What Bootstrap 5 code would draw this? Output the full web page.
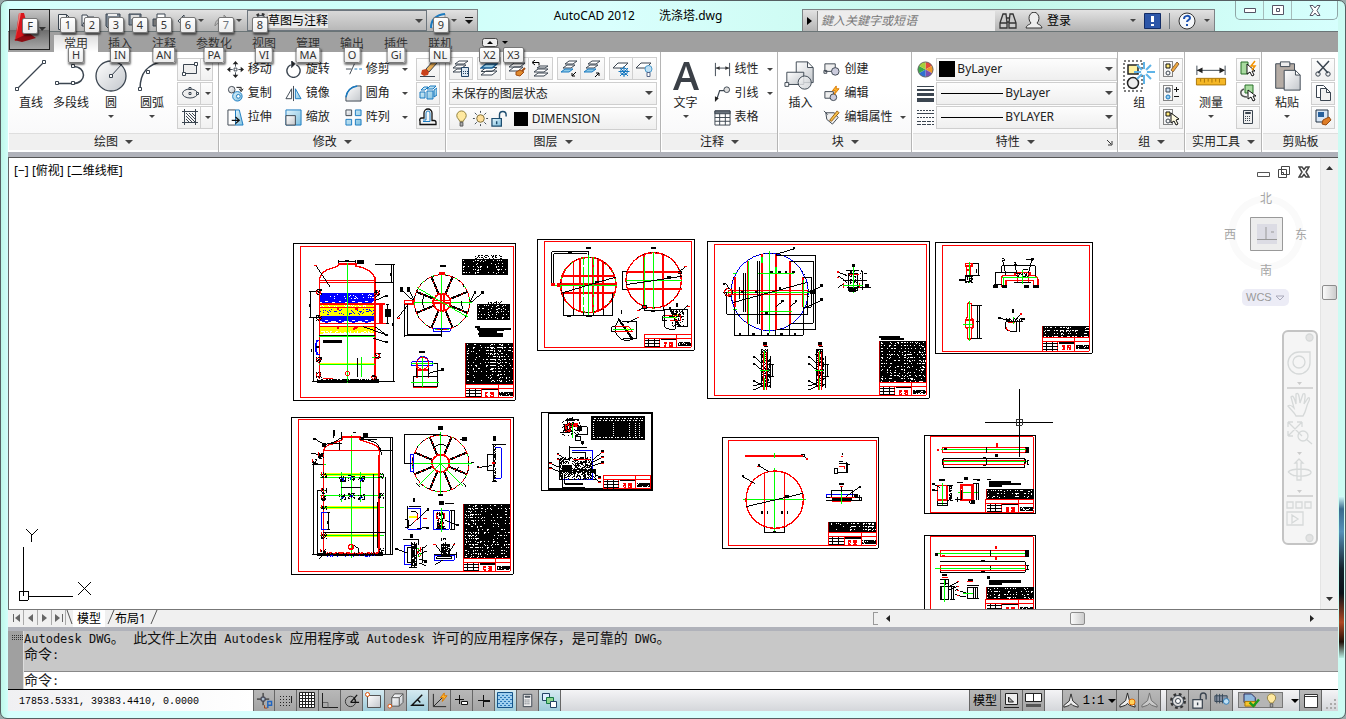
<!DOCTYPE html>
<html lang="zh-CN">
<head>
<meta charset="utf-8">
<meta name="viewport" content="width=device-width, initial-scale=1">
<title>AutoCAD 2012 洗涤塔.dwg</title>
<link href="https://cdn.jsdelivr.net/npm/bootstrap@5.3.0/dist/css/bootstrap.min.css" rel="stylesheet">
<style>
body{font:12px/16px "Noto Sans","Noto Sans CJK SC",sans-serif;color:#222;background:#9aa;overflow:hidden}
button,input,select{font:inherit;color:inherit}
button{border:0;background:none;padding:0}
svg{display:block;flex:none}
use{fill:none;stroke:#3b4550}
.win{border:1px solid #555f62;border-radius:7px;padding:0 7px 7px;background:linear-gradient(90deg,#bdf8e8,#d6fffd 8px,#d6fffd 60%,#cdfbf3)}
.win::after{content:"";position:absolute;right:1px;top:495px;bottom:60px;width:5px;background:linear-gradient(#d6fffd,#3a6a8c 8%,#5690b8 22%,#14202a 45%,#0a1018 60%,#b04a25 78%,#201008 90%,#b9f0e4)}
.titlebar{height:31px;border-bottom:1px solid #6a7476;background:linear-gradient(90deg,#d6fffd,#cdfff8 30%,#d9fffd 45%,#c4f8ea 75%,#d6fffd)}
.tbar{height:22px;border:1px solid #7d8285;border-bottom:0;background:linear-gradient(#e2e2e2,#b4b4b4)}
.qat{margin-left:40px}
.appbtn{position:absolute;left:8px;top:8px;width:41px;height:41px;border:1px solid #222;background:linear-gradient(#c4c4c4,#8d8d8d 50%,#6d6d6d 52%,#a8a8a8);z-index:5}
.kt{position:absolute;z-index:6;min-width:16px;height:16px;padding:0 3px;border:1px solid #777;border-radius:2px;background:linear-gradient(#fff,#ececec);box-shadow:1px 2px 2px #0008;font-size:11px;line-height:14px;text-align:center;color:#333}
.tri{width:0;height:0;border:4px solid transparent;border-top-color:#444;border-bottom:0;flex:none}
.tri.sm{border-width:3px;border-bottom:0}
.qb{position:relative;width:24px;height:21px;flex:none}
.qb>svg{margin:2px 0 0 2px}
.qb .kt{left:6px;top:7px}
.tabs{height:20px;background:#a0a0a0;padding-left:46px}
.tab{position:relative;padding:0 10px;height:20px;line-height:23px;color:#333}
.tab.on{height:17px;line-height:18px;margin-top:3px;background:linear-gradient(#ddd,#fff)}
.tab .kt{top:15px;left:50%;translate:-50% 0}
.tab.on .kt{top:12px}
.ribbon{height:100px;background:#fff;padding-left:1px}
.panel{display:flex;flex-direction:column;border-right:1px solid #b5b5b5;margin-right:1px;min-width:0}
.pbody{height:81px;padding-top:5px;display:flex;background:linear-gradient(#fff 50%,#f9f9fa)}
.ptitle{height:17px;background:#f0f0f0;border-top:1px solid #dedede;display:flex;align-items:center;justify-content:center;gap:7px;position:relative}
.big{display:flex;flex-direction:column;align-items:center;width:40px;height:72px}
.big .pic{height:38px;display:flex;align-items:center}
.big .tri{margin-top:4px}
.grid3{display:grid;grid-template-rows:repeat(3,24px);align-items:center}
.sm-b{display:flex;align-items:center;gap:4px;height:24px;white-space:nowrap;text-align:left}
.sm-b .tri{margin-left:8px}
.near .sm-b .tri{margin-left:4px}
.box{width:24px;height:23px;border:1px solid #cfcfcf;background:linear-gradient(#fdfdfd,#f0f0f0);display:flex;align-items:center;justify-content:center}
.d-flex>.box+.box{border-left:0}
.split{width:36px;justify-content:flex-start;padding-left:3px;gap:6px;position:relative}
.split::before{content:"";position:absolute;left:22px;top:0;bottom:0;border-left:1px solid #cfcfcf}
.combo{position:relative;height:23px;border:1px solid #cfcfcf;background:linear-gradient(#fdfdfd,#efefef);display:flex;align-items:center}
.combo select{appearance:none;border:0;background:none;flex:1;min-width:0;height:20px;padding:0 12px 0 2px;outline:0}
.combo>.tri{position:absolute;right:3px;top:8px}
.wsp{width:180px;height:21px;background:linear-gradient(#d8d8d8,#b8b8b8)}
.combo.wsp select{padding:0;flex:none;width:60px;margin-left:-2px;height:15px;line-height:15px;background:#e9e9e9;color:#000}
.props{gap:2px}
.ln{width:62px;height:1px;background:#000;flex:none}
.strip{background:#b0b2ba}
.work{border-top:1px solid #555;border-left:1px solid #666;background:#fff;min-height:0}
.drawing{position:absolute;inset:0;width:100%;height:100%}
.vs{width:18px;background:#f0f0f0;border-left:1px solid #e4e4e4}
.thumb{border:1px solid #8c8c8c;border-radius:2px;background:linear-gradient(90deg,#fafafa,#ccc)}
.vname{left:5px;top:5px;color:#000}
.mdi{right:10px;top:8px}
.cube{right:9px;top:32px;width:88px;height:120px;color:#a5a5a5}
.wcs{right:31px;top:131px;width:47px;height:17px;border-radius:5px;background:#ececf6;color:#999;font:11px/17px "Liberation Sans",sans-serif;padding-left:4px;text-align:left}
.navbox{right:2px;top:172px;width:36px;height:215px;border:2px solid #c4c4c4;border-radius:6px;background:#f5f5f5}
.lay{height:18px;background:#f0f0f0;border-top:1px solid #777}
.lay .nv{width:14px;border-right:1px solid #aaa;height:15px;display:flex;align-items:center;justify-content:center}
.ltab{font-size:12px;line-height:16px;position:relative;color:#000}
.hs{height:17px;width:35%;padding-right:24px}
.cmd{height:40px;background:#c8c8c8;font-family:"DejaVu Sans Mono","Noto Sans CJK SC",monospace;color:#111}
.cmdgrip{width:16px;background:#a0a0a0;height:58px;border-right:1px solid #ddd}
.cj{font-size:14px;line-height:15px}
.cj span{font-size:12px}
.cin{height:18px;border-top:1px solid #888;background:#fff;font-family:"DejaVu Sans Mono","Noto Sans CJK SC",monospace;font-size:14px;display:flex;align-items:center}
.cin input{border:0;outline:0;height:16px;padding:0}
.status{height:22px;border-top:1px solid #000;background:linear-gradient(#f4f4f6,#d4d6da)}
.coord{width:245px;padding-left:11px;font:10px/23px "Liberation Mono",monospace;color:#000;background:linear-gradient(90deg,#f0f0f2,#fff)}
.st{width:22px;height:21px;border-right:1px solid #666;background:linear-gradient(#b8b8b8,#a4a4a4);display:flex;align-items:center;justify-content:center;flex:none}
.st.on{background:linear-gradient(#d5eaf1,#9ecbd9)}
#toggles .st:first-child{border-left:1px solid #666}
.sgroup{display:flex;border-left:1px solid #666}
.tray{width:45px;height:16px;margin:2px 0 0 5px;background:#b5b5b5;border:1px solid #777;gap:4px}
.search{width:178px;height:20px;border:0;border-left:1px solid #888;background:#ededed;font-style:italic;padding:0 3px;outline:0}
.search::placeholder{color:#777}
.wc{border:1px solid #8fa5a5;border-top:0;border-radius:0 0 5px 5px;height:19px;margin-left:20px}
.wc button{width:28px;height:18px;display:flex;align-items:center;justify-content:center;border-right:1px solid #a5bcbb}
.wc button:last-child{border:0;width:45px}
</style>
</head>
<body>
<svg width="0" height="0" class="position-absolute">
<defs>
<linearGradient id="gf" x2="1" y2="1"><stop stop-color="#fff"/><stop offset="1" stop-color="#c3c7cc"/></linearGradient>
<linearGradient id="gb" x2="1" y2="1"><stop stop-color="#e2f4fb"/><stop offset="1" stop-color="#7fc0e0"/></linearGradient>
<symbol id="new" viewBox="0 0 18 18"><path fill="url(#gf)" d="M2.500 1.500h8l4 4v11h-12zM10.500 1.500v4h4"/></symbol>
<symbol id="open" viewBox="0 0 18 18"><path fill="url(#gf)" d="M2 13V2h5l1 2h6v3M2 13l4-7h11l-4 7z"/></symbol>
<symbol id="save" viewBox="0 0 18 18"><path fill="#7d8894" d="M2 1h14v14H4l-2-2z"/><path fill="#eee" stroke="none" d="M4 1h9v2H4zM5 9h8v6H5z"/></symbol>
<symbol id="saveas" viewBox="0 0 18 18"><path fill="#7d8894" d="M1 1h12v11H1z"/><path fill="#ddd" stroke="none" d="M3 2h8v4H3z"/><path fill="#eee" d="M5 5h11v10H5z"/></symbol>
<symbol id="print" viewBox="0 0 18 18"><path fill="#fff" d="M5 6V1h8v5"/><path fill="#777" d="M1 6h16v7H1z"/><path fill="#fff" d="M5 10h8v6H5z"/></symbol>
<symbol id="undo" viewBox="0 0 18 18"><path fill="#eef2f5" d="M2 8l6-6v3c6 0 9 3 9 8-2-3-5-4-9-4v4z"/></symbol>
<symbol id="redo" viewBox="0 0 18 18"><path stroke="#888" fill="#bbb" d="M16 8l-6-6v3c-6 0-9 3-9 8 2-3 5-4 9-4v4z"/></symbol>
<symbol id="gear" viewBox="0 0 18 18"><circle cx="9" cy="9" r="6.500" stroke-width="3" stroke-dasharray="2.600 2.500" stroke="#333"/><circle cx="9" cy="9" r="5.500" fill="#ddd"/><circle cx="9" cy="9" r="2.500" fill="#fff"/></symbol>
<symbol id="arcq" viewBox="0 0 18 18"><path fill="url(#gf)" stroke="#999" d="M2 16C2 7 7 3 16 2v14z"/><path stroke="#1a7ac0" stroke-width="2" d="M2 16C2 7 7 3 16 2"/></symbol>
<symbol id="move" viewBox="0 0 18 18"><path d="M9 1v5M9 12v5M1 9h5M12 9h5M7.500 7.500h3v3h-3z"/><path fill="#222" stroke="none" d="M9 0l3 3.500H6zM9 18l3-3.500H6zM0 9l3.500-3v6zM18 9l-3.500-3v6z"/></symbol>
<symbol id="rotate" viewBox="0 0 18 18"><path stroke-width="1.500" d="M6 4a7 7 0 1 0 6 0"/><path fill="#222" d="M7 0l4 3-4 4z"/></symbol>
<symbol id="trim" viewBox="0 0 18 18"><path d="M1 8.500h6M5 14l5-11"/><path stroke="#1a7ac0" stroke-dasharray="3 2" d="M10 8.500h8"/></symbol>
<symbol id="copy" viewBox="0 0 18 18"><circle cx="5" cy="5" r="3.500" fill="url(#gf)"/><circle cx="11" cy="12" r="5" fill="url(#gb)" stroke="#1a7ac0"/><circle cx="12" cy="12" r="2" fill="#fff" stroke="#1a7ac0"/><path stroke="#111" d="M10 2.500h5v3M13 4l2 3 2-3"/></symbol>
<symbol id="mirror" viewBox="0 0 18 18"><path fill="#fff" d="M1 14.500L7 4v10.500z"/><path fill="url(#gb)" stroke="#1a7ac0" d="M17 14.500L11 4v10.500z"/><path d="M9 1v16"/></symbol>
<symbol id="fillet" viewBox="0 0 18 18"><path fill="url(#gf)" d="M1 17V13C2 6 6 2 13 1h4v16z"/><path stroke="#1a7ac0" stroke-width="1.500" d="M1 13C2 6 6 2 13 1"/></symbol>
<symbol id="stretch" viewBox="0 0 18 18"><path fill="#fff" d="M1 1h8v16H1z"/><path fill="url(#gb)" stroke="#1a7ac0" d="M9 1h4l4 16H9z"/><path stroke="#111" stroke-width="1.300" d="M5 12h7M9 8.500l4 3.500-4 3.500"/></symbol>
<symbol id="scale" viewBox="0 0 18 18"><path fill="url(#gb)" stroke="#1a7ac0" d="M1 1h16v16H1z"/><path fill="url(#gf)" d="M1 7h10v10H1z"/></symbol>
<symbol id="array" viewBox="0 0 18 18"><path fill="url(#gf)" d="M1 1h6v6H1z"/><path stroke="#1a7ac0" fill="url(#gb)" d="M11 1h6v6h-6zM1 11h6v6H1zM11 11h6v6h-6z"/></symbol>
<symbol id="erase" viewBox="0 0 18 18"><path d="M1 16.500h15"/><path fill="#e9ad55" d="M7 9l8-9 3 3-8 9z"/><path stroke="none" fill="#c8401a" d="M3 10l4-1 3 3-1 3-4 1-3-2z"/></symbol>
<symbol id="explode" viewBox="0 0 18 18"><path fill="url(#gb)" stroke="#1a7ac0" d="M1 8h5v6H1zM8 7h6v8H8zM2 6l3-3h4L6 6zM8 5l3-3h6l-3 3zM15 6l3-2v7l-3 2z"/></symbol>
<symbol id="offset" viewBox="0 0 18 18"><path stroke="#111" stroke-width="1.300" d="M1 16.500h16v-2a2 2 0 0 0-2-2h-2V5a4 4 0 0 0-8 0v5H3a2 2 0 0 0-2 3z"/><path stroke="#1a7ac0" d="M4 13.500h7V5a2 2 0 0 0-4 0v7H4"/></symbol>
<symbol id="rect" viewBox="0 0 18 18"><path fill="#eee" d="M2.500 4.500h13v9h-13z"/><path fill="#fff" d="M1.500 12.500h3v3h-3zM13.500 2.500h3v3h-3z"/></symbol>
<symbol id="ell" viewBox="0 0 18 18"><ellipse cx="9" cy="9.500" rx="7.500" ry="4.500" fill="#eee"/><path fill="#fff" d="M8 3.500h2v2H8zM8 8.500h2v2H8zM15.500 8.500h2v2h-2z"/></symbol>
<symbol id="hatch" viewBox="0 0 18 18"><path d="M3.500 1v16M14.500 1v16M1 3.500h16M1 14.500h16M5 5l9 9M8 5l6 6M5 8l6 6M11 5l3 3M5 11l3 3"/></symbol>
<symbol id="line" viewBox="0 0 34 34"><path stroke-width="1.300" d="M3 30L29 4"/><path fill="#fff" d="M1.500 28.500h3v3h-3zM28.500 1.500h3v3h-3z"/></symbol>
<symbol id="poly" viewBox="0 0 34 34"><path stroke-width="1.500" d="M3 24.500h16c14 0 14-17 0-17"/><path fill="#fff" d="M1.500 22.500h3v3h-3zM17.500 22.500h3v3h-3zM17.500 5.500h3v3h-3z"/></symbol>
<symbol id="circ" viewBox="0 0 34 34"><circle cx="17" cy="17" r="15" fill="url(#gf)" stroke-width="1.300"/><path d="M17 17L28 5"/><path fill="#fff" d="M15.500 15.500h3v3h-3z"/></symbol>
<symbol id="arc" viewBox="0 0 34 34"><path stroke-width="1.500" d="M5 30C5 14 12 5 30 2"/><path fill="#fff" d="M3.500 28.500h3v3h-3zM11.500 11.500h3v3h-3z"/></symbol>
<symbol id="layb" viewBox="0 0 18 18"><path fill="#fff" d="M1 15l5-4h11l-5 4zM1 11.500l5-4h11l-5 4z"/><path fill="#9bd0ea" stroke="#1a5f95" stroke-width="1.300" d="M1 8l5-4h11l-5 4z"/></symbol>
<symbol id="calcl" viewBox="0 0 18 18"><path fill="#fff" d="M1 12l4-3h7l-4 3zM1 8l4-3h9l-4 3zM3 4l4-3h9l-4 3z"/><path fill="#dce8f3" stroke="#246" d="M9.500 7.500h7v9h-7z"/><path stroke="#246" stroke-dasharray="1 1" d="M11 11.500h5M11 13.500h5"/></symbol>
<symbol id="layp" viewBox="0 0 18 18"><path fill="#fff" d="M1 11l5-4h9l-5 4zM1 7l5-4h11l-5 4z"/><path fill="#e08a2c" stroke="#a04a10" d="M8 12l4-2 4 2-4 4-4-1z"/><path stroke="#a04a10" stroke-width="2" d="M14 11l3-3"/></symbol>
<symbol id="layu" viewBox="0 0 18 18"><path fill="#fff" d="M3 16l4-3h10l-4 3zM3 12l4-3h10l-4 3zM6 8l3-2h8l-3 2z"/><path stroke="#000" d="M2 2.500h6v3M4 0L1 2.500 4 5"/></symbol>
<symbol id="layin" viewBox="0 0 18 18"><path fill="#fff" d="M3 8l4-3h8l-4 3zM5 4l4-3h8l-4 3z"/><path fill="#8cc8e6" stroke="#1a7ac0" d="M1 12l4-3h8l-4 3z"/><path stroke="#000" d="M16 12l-4 4M12 13v3h3"/></symbol>
<symbol id="layout" viewBox="0 0 18 18"><path fill="#fff" d="M3 8l4-3h8l-4 3zM5 4l4-3h8l-4 3z"/><path fill="#8cc8e6" stroke="#1a7ac0" d="M1 12l4-3h8l-4 3z"/><path stroke="#000" d="M12 17l4-4M13 13h3v3"/></symbol>
<symbol id="layfr" viewBox="0 0 18 18"><path fill="#fff" d="M1 8l5-5h10l-5 5z"/><path stroke="#1a7ac0" d="M12 6v11M6.500 11.500h11M8 8l8 8M16 8l-8 8"/><circle cx="12" cy="11.500" r="3.500" stroke="#1a7ac0"/></symbol>
<symbol id="layof" viewBox="0 0 18 18"><path fill="#fff" d="M1 8l5-5h10l-5 5z"/><circle cx="13.500" cy="9" r="3.500" fill="#bfe0f5" stroke="#4a9acb"/><path stroke="#568" fill="#fff" d="M12 12.500h3v4h-3z"/></symbol>
<symbol id="bulb" viewBox="0 0 18 18"><path stroke="#8b7a35" fill="#ffe9a0" d="M7 12c0-2-3-3-3-6a5 5 0 0 1 10 0c0 3-3 4-3 6z"/><path fill="#aaa" stroke="#555" d="M7.500 13h3v4h-3z"/></symbol>
<symbol id="sun" viewBox="0 0 18 18"><circle cx="9" cy="9" r="4" fill="#ffdf9a" stroke="#7a6a35"/><path d="M9 1v2M9 15v2M1 9h2M15 9h2M3 3l2 2M13 13l2 2M15 3l-2 2M5 13l-2 2"/></symbol>
<symbol id="unlock" viewBox="0 0 18 18"><path fill="url(#gb)" stroke="#1d4c6e" stroke-width="1.300" d="M1 9h10v8H1z"/><path stroke="#1d4c6e" stroke-width="1.500" d="M9 9V5a3 3 0 0 1 7 0v2M6 12v3"/></symbol>
<symbol id="lock2" viewBox="0 0 18 18"><path fill="#eee" stroke-width="1.300" d="M2 8h10v9H2z"/><path stroke-width="1.500" d="M10 8V4a3 3 0 0 1 6 0v4M7 11v3"/></symbol>
<symbol id="dim" viewBox="0 0 18 18"><path d="M1.500 2v14M16.500 2v14M2 7.500h14"/><path fill="#333" stroke="none" d="M2 7.500l4-2v4zM16 7.500l-4-2v4z"/></symbol>
<symbol id="lead" viewBox="0 0 18 18"><path stroke-width="1.300" d="M3 15l3-9h5"/><path fill="#222" stroke="none" d="M1 18v-6l4 2z"/><circle cx="13.500" cy="5" r="3" fill="#ddd"/></symbol>
<symbol id="table" viewBox="0 0 18 18"><path fill="#fff" d="M1 2h16v15H1zM1 9h16M1 13h16M6 5v12M12 5v12"/><path fill="#68727c" d="M1 2h16v3H1z"/></symbol>
<symbol id="ins" viewBox="0 0 34 34"><path fill="url(#gf)" d="M13 2h12l6 6v16H13zM25 2v6h6"/><path fill="url(#gf)" d="M3 13h18v13H3z"/><circle cx="22" cy="24" r="7" fill="url(#gf)" fill-opacity=".8"/><path fill="#fff" d="M1 24h4v4H1z"/></symbol>
<symbol id="bcre" viewBox="0 0 18 18"><path fill="#eee" d="M2 3h11v8H2zM1 10h3v3H1z"/><circle cx="13" cy="11" r="4" fill="#ccd"/></symbol>
<symbol id="bedit" viewBox="0 0 18 18"><path fill="#eee" d="M2 7h9v7H2z"/><circle cx="11" cy="13" r="3.500" fill="#ccd"/><path fill="#ffb52b" stroke="#d97800" d="M14 1l-4 5h3l-1 4 5-6h-3z"/></symbol>
<symbol id="battr" viewBox="0 0 18 18"><path fill="#eee" d="M3 4h9l4 5-6 7-6-5zM1 2l4 4"/><path fill="#f7c04a" stroke="#965d10" d="M7 12l8-10 2 2-8 9z"/></symbol>
<symbol id="cw" viewBox="0 0 18 18"><g stroke="none"><path fill="#e34a3a" d="M9 9V1a8 8 0 0 1 7 4z"/><path fill="#ed9a2b" d="M9 9l7-4a8 8 0 0 1 0 8z"/><path fill="#7b4fb0" d="M9 9l7 4a8 8 0 0 1-7 4z"/><path fill="#2f6fd0" d="M9 9v8a8 8 0 0 1-7-4z"/><path fill="#3aa84a" d="M9 9l-7 4a8 8 0 0 1 0-8z"/><path fill="#a7cf3a" d="M9 9L2 5a8 8 0 0 1 7-4z"/></g><circle cx="9" cy="9" r="8" stroke="#666"/></symbol>
<symbol id="lw" viewBox="0 0 17 17"><path stroke-width="1" d="M0 1.500h17"/><path stroke-width="2" d="M0 5h17"/><path stroke-width="3" d="M0 9.500h17"/><path stroke-width="4" d="M0 15h17"/></symbol>
<symbol id="lt" viewBox="0 0 17 17"><path stroke-dasharray="2 1" d="M0 1.500h17M0 8.500h17"/><path d="M0 4.500h17"/><path stroke-dasharray="4 1" d="M0 12.500h17M0 15.500h17"/></symbol>
<symbol id="grp" viewBox="0 0 34 34"><path stroke="#000" stroke-dasharray="2 2" d="M2 2h18v30H2z"/><path fill="#fff2a0" stroke="#222" stroke-width="1.500" d="M6 6h10v9H6z"/><circle cx="11" cy="24" r="5.500" fill="#eee" stroke="#222" stroke-width="1.500"/><path stroke="#5fb4e8" stroke-width="2" d="M22 3v22M12 13h21M15 6l14 14M29 6L15 20"/><circle cx="22" cy="13" r="3" fill="#fff" stroke="none"/></symbol>
<symbol id="g1" viewBox="0 0 18 18"><path stroke="#111" stroke-dasharray="1 1" d="M1.500 1.500h9v15h-9z"/><path fill="#ffe97a" stroke="#111" d="M4 4h4v4H4z"/><circle cx="6" cy="13" r="2"/><path fill="#f0a83c" stroke="#864" d="M9 10l6-8 2 2-6 8z"/></symbol>
<symbol id="g2" viewBox="0 0 18 18"><path stroke="#111" stroke-dasharray="1 1" d="M1.500 1.500h9v15h-9z"/><path fill="#cde" d="M4 4h4v4H4z"/><circle cx="6" cy="13" r="2" fill="#9ce" stroke="#1a7ac0"/><path stroke="#111" d="M12 5.500h5M14.500 3v5M12 12.500h5"/></symbol>
<symbol id="g3" viewBox="0 0 18 18"><path stroke="#111" stroke-dasharray="1 1" d="M1.500 1.500h9v15h-9z"/><path fill="#ffe97a" stroke="#111" d="M4 4h4v4H4z"/><circle cx="6" cy="13" r="2"/><path fill="#fffbe0" stroke="#111" d="M9 5v10l3-2 2 4 2-1-2-4 3-1z"/></symbol>
<symbol id="meas" viewBox="0 0 34 34"><path d="M2 6v10M32 6v10M2 11h29"/><path fill="#222" stroke="none" d="M2 11l6-3v6zM32 11l-6-3v6z"/><path fill="#f5b726" stroke="#a87308" d="M1.500 19.500h31v7h-31zM6 20v3M10 20v4M14 20v3M18 20v4M22 20v3M26 20v4"/></symbol>
<symbol id="u1" viewBox="0 0 18 18"><path fill="#a8dba0" stroke="#287028" d="M2 2h7v12H2z"/><path fill="#fff" stroke="#111" d="M8 4v10l3-2 2 4 2-1-2-4h3z"/><path stroke="#f39200" stroke-width="1.500" d="M16 1l-4 5h4l-3 4"/></symbol>
<symbol id="u2" viewBox="0 0 18 18"><path fill="#a8dba0" stroke="#287028" d="M6 1h8v8H6z"/><path stroke="#555" stroke-width="1.500" d="M5 5c-5 2-4 8 3 8"/><path fill="#fff" stroke="#111" d="M9 6v9l3-2 2 4 2-1-2-4h3z"/></symbol>
<symbol id="calc" viewBox="0 0 18 18"><path fill="#eee" d="M4.500 2.500h9v13h-9z"/><path fill="#aaa" d="M6.500 4.500h5v1h-5z"/><path stroke-dasharray="1 1" d="M6 8.500h6M6 10.500h6M6 12.500h6"/></symbol>
<symbol id="paste" viewBox="0 0 34 34"><path fill="#b5aca5" d="M5 4h20v26H5z"/><path fill="#eee" d="M10 2h10v5H10z"/><path fill="url(#gf)" d="M14 11h12l5 5v16H14zM26 11v5h5"/></symbol>
<symbol id="cut" viewBox="0 0 18 18"><path stroke-width="1.500" d="M3 1l11 12M15 1L4 13"/><circle cx="4" cy="14" r="2.200"/><circle cx="14" cy="14" r="2.200"/></symbol>
<symbol id="cp" viewBox="0 0 18 18"><path fill="#fff" d="M2.500 1.500h7l3 3v9h-10z"/><path fill="#f2f2f2" d="M6.500 4.500h6l4 4v8h-10zM12.500 4.500v4h4"/></symbol>
<symbol id="mp" viewBox="0 0 18 18"><path fill="#d8e6f5" stroke="#234" d="M2 2h12v12H2z"/><path fill="#27609c" stroke="none" d="M4 4h6v5H4z"/><path fill="#de7d27" stroke="#954a10" d="M9 12l6-3 2 3-5 5-4-1z"/></symbol>
<symbol id="bino" viewBox="0 0 18 18"><path fill="#ccc" stroke="#333" stroke-width="1.300" d="M1 11l3-9h3l1 9v5H1zM17 11l-3-9h-3l-1 9v5h7zM8 6h2M8 10h2M1 11h7M10 11h7"/></symbol>
<symbol id="user" viewBox="0 0 18 18"><path fill="#eee" stroke="#333" d="M1 16c1-4 4-3 5-5a5 6 0 1 1 6 0c1 2 4 1 5 5z"/></symbol>
<symbol id="s-snap" viewBox="0 0 18 18"><path stroke="#111" d="M7.500 1v13M1 7.500h13"/><path fill="#abc" stroke="#334" d="M5.500 5.500h4v4h-4z"/><path stroke="#2065c0" stroke-width="1.500" d="M12.500 17v-7h4v4h-4"/><path stroke="#a04010" d="M9 14v3h3"/></symbol>
<symbol id="s-dots" viewBox="0 0 17 17"><path stroke="#222" stroke-dasharray="1 2" d="M3 4.500h10M3 7.500h10M3 10.500h10M3 13.500h12"/><path stroke="#222" d="M14.500 4v7"/></symbol>
<symbol id="s-grid" viewBox="0 0 17 17"><path fill="#fff" stroke="#222" d="M.5.5h15v15H.5zM3.500 0v16M6.500 0v16M9.500 0v16M12.500 0v16M0 3.500h16M0 6.500h16M0 9.500h16M0 12.500h16"/></symbol>
<symbol id="s-orth" viewBox="0 0 17 17"><path stroke="#222" d="M1.500 1v14.500H17"/><path stroke="#666" d="M2 10.500h5v5"/></symbol>
<symbol id="s-pol" viewBox="0 0 18 18"><circle cx="8" cy="10" r="5.500" stroke="#333"/><path stroke="#111" stroke-width="1.300" d="M8 11l7-8M8 11h9M13 11a5 5 0 0 0-1-4"/></symbol>
<symbol id="s-os" viewBox="0 0 17 17"><path fill="url(#gf)" stroke="#555" d="M2.500 3.500h13v12h-13z"/><circle cx="2.500" cy="2.500" r="2" stroke="#e05000" fill="#fff"/></symbol>
<symbol id="s-3d" viewBox="0 0 18 18"><path fill="url(#gf)" stroke="#555" d="M5 6l3-4h9v9l-4 4H5zM5 6h8v9M13 6l4-4"/><circle cx="3" cy="15" r="2" stroke="#e05000" fill="#fff"/></symbol>
<symbol id="s-ang" viewBox="0 0 18 18"><path stroke="#111" stroke-width="1.500" d="M14 3L3 14h13M9 8l3 3"/></symbol>
<symbol id="s-ucs" viewBox="0 0 18 18"><path stroke="#222" d="M2.500 2v13.500H16M3 15L12 6"/><path fill="#ffb52b" stroke="#d97800" d="M14 1l-4 5h3l-1 4 5-6h-3z"/></symbol>
<symbol id="s-dyn" viewBox="0 0 17 17"><path stroke="#111" d="M6.500 3v9M2 7.500h9"/><path fill="#fff" stroke="#111" d="M8.500 9.500h6v3h-6z"/></symbol>
<symbol id="s-lwt" viewBox="0 0 17 17"><path stroke="#111" d="M8.500 3v12M3 8.500h6"/><path stroke="#111" stroke-width="2" d="M9 9h6"/></symbol>
<symbol id="s-tpy" viewBox="0 0 17 17"><path fill="#9fd0ef" stroke="#14548a" d="M.5.5h15v15H.5z"/><path stroke="#2a78b8" stroke-dasharray="2 2" d="M1 3.500h14M1 7.500h14M1 11.500h14M3 5.500h12M3 9.500h12M3 13.500h12"/></symbol>
<symbol id="s-sel" viewBox="0 0 17 17"><path fill="#def" stroke="#246" d="M1.500 1.500h7v7h-7z"/><path fill="#8fd68f" stroke="#174" d="M5.500 5.500h7v6h-7z"/><path fill="#fff" stroke="#246" d="M9.500 9.500h6v6h-6z"/></symbol>
<symbol id="s-lay1" viewBox="0 0 17 17"><path fill="#eee" stroke="#222" d="M2.500 1.500h12v11h-12zM5.500 5v5h5z"/><path stroke="#222" d="M1 15.500h15"/></symbol>
<symbol id="s-lay2" viewBox="0 0 17 17"><path fill="#fff" stroke="#222" d="M.5 1.500h16v8H.5zM8.500 2v7"/><path stroke="#555" stroke-width="3" d="M1 13.500h15"/></symbol>
<symbol id="s-ann" viewBox="0 0 18 18"><path fill="#eee" stroke="#222" d="M9 1L7 9l-6 5v2l6-2 2-2 2 2 6 2v-2l-6-5z"/></symbol>
</defs></svg>

<div class="win position-relative d-flex flex-column vh-100">
<button class="appbtn" aria-label="应用程序菜单"><svg width="39" height="39" viewBox="0 0 39 39"><path fill="#d9161c" d="M9 3h5l6 22-15 6z"/><path fill="#8c0c12" d="M4 30l15-7 7 5-14 4z"/><path fill="#f27b78" d="M9 3h2L6 27z"/><path fill="#333" d="M29 17h7l-4 4z"/></svg><span class="kt" style="left:12px;top:8px">F</span></button>

<header class="titlebar d-flex align-items-end">
  <div class="tbar qat d-flex flex-shrink-0">
    <div class="d-flex" style="padding-left:5px;width:198px">
    <button class="qb" aria-label="新建"><svg width="18" height="18"><use href="#new"/></svg><span class="kt">1</span></button>
    <button class="qb" aria-label="打开"><svg width="18" height="18"><use href="#open"/></svg><span class="kt">2</span></button>
    <button class="qb" aria-label="保存"><svg width="18" height="18"><use href="#save"/></svg><span class="kt">3</span></button>
    <button class="qb" aria-label="另存为"><svg width="18" height="18"><use href="#saveas"/></svg><span class="kt">4</span></button>
    <button class="qb" aria-label="打印"><svg width="18" height="18"><use href="#print"/></svg><span class="kt">5</span></button>
    <button class="qb" aria-label="放弃"><svg width="18" height="18"><use href="#undo"/></svg><span class="kt">6</span></button>
    <span class="tri sm align-self-center me-2"></span>
    <button class="qb" aria-label="重做"><svg width="18" height="18"><use href="#redo"/></svg><span class="kt text-secondary">7</span></button>
    <span class="tri sm align-self-center"></span>
    </div>
    <div class="combo wsp border-secondary flex-shrink-0">
      <svg width="18" height="18" class="ms-1"><use href="#gear"/></svg><span class="kt" style="left:4px;top:6px">8</span>
      <select aria-label="工作空间"><option>草图与注释</option></select><span class="tri"></span>
    </div>
    <div class="qb"><svg width="18" height="18"><use href="#arcq"/></svg><span class="kt">9</span></div>
    <span class="tri sm align-self-center"></span>
    <span class="align-self-center ms-2 me-1" style="border-top:1px solid #111;padding-top:2px"><span class="tri d-block" style="border-top-color:#111"></span></span>
  </div>
  <div class="flex-grow-1 d-flex justify-content-center gap-4 align-self-center text-black pe-1"><span>AutoCAD 2012</span><span>洗涤塔.dwg</span></div>
  <div class="tbar d-flex align-items-center flex-shrink-0" style="width:413px">
    <button class="px-1" aria-label="展开"><svg width="6" height="8"><path d="M0 0l5 4-5 4z"/></svg></button>
    <input class="search" type="search" placeholder="鍵入关鍵字或短语" aria-label="搜索">
    <svg width="18" height="18" class="ms-1"><use href="#bino"/></svg>
    <svg width="18" height="18" class="ms-2"><use href="#user"/></svg>
    <button class="ms-1 text-black">登录</button>
    <span class="tri sm ms-auto"></span>
    <svg width="17" height="16" class="ms-2" viewBox="0 0 17 16"><path fill="#2c56a8" stroke="#122c66" d="M.5.5h16v15H.5z"/><path fill="#fff" d="M7 3h3v6H7zM7 11h3v2H7z"/></svg>
    <span class="border-start border-secondary ms-2" style="height:16px"></span>
    <svg width="18" height="18" class="ms-2" viewBox="0 0 18 18" role="img" aria-label="帮助"><circle cx="9" cy="9" r="8" fill="#f5f7fa" stroke="#333"/><path fill="none" stroke="#1d52b0" stroke-width="2" d="M6 7c0-4 6-4 6-1 0 2-3 2-3 4M9 12v2"/></svg>
    <span class="tri sm ms-2 me-1"></span>
  </div>
  <div class="wc d-flex align-self-start flex-shrink-0">
    <button aria-label="最小化"><svg width="12" height="5"><path fill="#fff" stroke="#556" d="M.5.5h11v4H.5z"/></svg></button>
    <button aria-label="还原"><svg width="12" height="10"><path fill="#fff" stroke="#556" d="M.5.5h11v9H.5zM4.500 3.500h3v3h-3z"/></svg></button>
    <button aria-label="关闭"><svg width="12" height="11" viewBox="0 0 12 11"><path fill="#fff" stroke="#556" d="M1 .5h3l2 2.500 2-2.500h3L8 5.500l3 5H8L6 8l-2 2.500H1l3-5z"/></svg></button>
  </div>
</header>

<nav class="tabs d-flex">
  <a class="tab on text-decoration-none" href="#">常用<span class="kt">H</span></a><a class="tab text-decoration-none" href="#">插入<span class="kt">IN</span></a><a class="tab text-decoration-none" href="#">注释<span class="kt">AN</span></a><a class="tab text-decoration-none" href="#">参数化<span class="kt">PA</span></a><a class="tab text-decoration-none" href="#">视图<span class="kt">VI</span></a><a class="tab text-decoration-none" href="#">管理<span class="kt">MA</span></a><a class="tab text-decoration-none" href="#">输出<span class="kt">O</span></a><a class="tab text-decoration-none" href="#">插件<span class="kt">Gi</span></a><a class="tab text-decoration-none" href="#">联机<span class="kt">NL</span></a>
  <button class="position-relative ms-3 px-1" aria-label="最小化功能区"><svg width="16" height="9"><rect x=".5" y=".5" width="15" height="8" rx="2" fill="#eee" stroke="#444"/><path d="M5 6l3-3 3 3z"/></svg><span class="kt" style="left:1px;top:15px">X2</span></button>
  <button class="position-relative" aria-label="功能区选项"><span class="tri sm d-block" style="border-top-color:#000"></span><span class="kt" style="left:1px;top:15px">X3</span></button>
</nav>

<div class="ribbon d-flex">
  <section class="panel" style="flex:209 1 0">
    <div class="pbody" style="padding-left:2px">
      <button class="big"><span class="pic"><svg width="34" height="34"><use href="#line"/></svg></span>直线</button>
      <button class="big"><span class="pic"><svg width="34" height="34"><use href="#poly"/></svg></span>多段线</button>
      <button class="big"><span class="pic"><svg width="34" height="34"><use href="#circ"/></svg></span>圆<span class="tri sm"></span></button>
      <button class="big" style="width:42px"><span class="pic"><svg width="34" height="34"><use href="#arc"/></svg></span>圆弧<span class="tri sm"></span></button>
      <div class="grid3 ms-1"><button class="box split" aria-label="矩形"><svg width="18" height="18"><use href="#rect"/></svg><span class="tri sm"></span></button><button class="box split" aria-label="椭圆"><svg width="18" height="18"><use href="#ell"/></svg><span class="tri sm"></span></button><button class="box split" aria-label="图案填充"><svg width="18" height="18"><use href="#hatch"/></svg><span class="tri sm"></span></button></div>
    </div>
    <div class="ptitle">绘图<span class="tri"></span></div>
  </section>
  <section class="panel" style="flex:225 1 0">
    <div class="pbody" style="padding-left:7px">
      <div class="grid3" style="width:58px"><button class="sm-b"><svg width="17" height="17"><use href="#move"/></svg>移动</button><button class="sm-b"><svg width="17" height="17"><use href="#copy"/></svg>复制</button><button class="sm-b"><svg width="17" height="17"><use href="#stretch"/></svg>拉伸</button></div>
      <div class="grid3" style="width:60px"><button class="sm-b"><svg width="17" height="17"><use href="#rotate"/></svg>旋转</button><button class="sm-b"><svg width="17" height="17"><use href="#mirror"/></svg>镜像</button><button class="sm-b"><svg width="17" height="17"><use href="#scale"/></svg>缩放</button></div>
      <div class="grid3" style="width:71px"><button class="sm-b"><svg width="17" height="17"><use href="#trim"/></svg>修剪<span class="tri sm"></span></button><button class="sm-b"><svg width="17" height="17"><use href="#fillet"/></svg>圆角<span class="tri sm"></span></button><button class="sm-b"><svg width="17" height="17"><use href="#array"/></svg>阵列<span class="tri sm"></span></button></div>
      <div class="grid3"><button class="box" aria-label="删除"><svg width="18" height="18"><use href="#erase"/></svg></button><button class="box" aria-label="分解"><svg width="18" height="18"><use href="#explode"/></svg></button><button class="box" aria-label="偏移"><svg width="18" height="18"><use href="#offset"/></svg></button></div>
    </div>
    <div class="ptitle">修改<span class="tri"></span></div>
  </section>
  <section class="panel" style="flex:213 1 0">
    <div class="pbody flex-column" style="padding-left:2px;padding-right:3px;gap:2px">
      <div class="d-flex" style="gap:4px">
        <div class="d-flex"><button class="box" aria-label="图层特性"><svg width="18" height="18"><use href="#calcl"/></svg></button></div>
        <div class="d-flex"><button class="box" aria-label="置为当前"><svg width="18" height="18"><use href="#layb"/></svg></button></div>
        <div class="d-flex"><button class="box" aria-label="匹配"><svg width="18" height="18"><use href="#layp"/></svg></button><button class="box" aria-label="上一个"><svg width="18" height="18"><use href="#layu"/></svg></button></div>
        <div class="d-flex"><button class="box" aria-label="隔离"><svg width="18" height="18"><use href="#layin"/></svg></button><button class="box" aria-label="取消隔离"><svg width="18" height="18"><use href="#layout"/></svg></button></div>
        <div class="d-flex"><button class="box" aria-label="冻结"><svg width="18" height="18"><use href="#layfr"/></svg></button><button class="box" aria-label="关闭"><svg width="18" height="18"><use href="#layof"/></svg></button></div>
      </div>
      <div class="combo"><select aria-label="图层状态"><option>未保存的图层状态</option></select><span class="tri"></span></div>
      <div class="combo" style="gap:2px;padding-left:3px"><svg width="17" height="17"><use href="#bulb"/></svg><svg width="17" height="17"><use href="#sun"/></svg><svg width="17" height="17"><use href="#unlock"/></svg><span class="bg-black ms-1" style="width:14px;height:14px"></span><select aria-label="图层"><option>DIMENSION</option></select><span class="tri"></span></div>
    </div>
    <div class="ptitle">图层<span class="tri"></span></div>
  </section>
  <section class="panel" style="flex:116 1 0">
    <div class="pbody">
      <button class="big" style="width:48px"><span class="pic"><svg width="28" height="30" viewBox="0 0 28 30"><path fill="#3b4047" d="M12 1h5l10 28h-5l-3-8H9l-3 8H1zM10 17h8L14 5z"/></svg></span>文字<span class="tri sm"></span></button>
      <div class="grid3 ms-1 near"><button class="sm-b"><svg width="17" height="17"><use href="#dim"/></svg>线性<span class="tri sm"></span></button><button class="sm-b"><svg width="17" height="17"><use href="#lead"/></svg>引线<span class="tri sm"></span></button><button class="sm-b"><svg width="17" height="17"><use href="#table"/></svg>表格</button></div>
    </div>
    <div class="ptitle">注释<span class="tri"></span></div>
  </section>
  <section class="panel" style="flex:132 1 0">
    <div class="pbody">
      <button class="big" style="width:42px"><span class="pic"><svg width="32" height="32"><use href="#ins"/></svg></span>插入</button>
      <div class="grid3 near" style="margin-left:2px"><button class="sm-b"><svg width="17" height="17"><use href="#bcre"/></svg>创建</button><button class="sm-b"><svg width="17" height="17"><use href="#bedit"/></svg>编辑</button><button class="sm-b"><svg width="17" height="17"><use href="#battr"/></svg>编辑属性<span class="tri sm"></span></button></div>
    </div>
    <div class="ptitle">块<span class="tri"></span></div>
  </section>
  <section class="panel" style="flex:204 1 0">
    <div class="pbody">
      <div class="grid3 w-100 ps-1">
        <div class="d-flex align-items-center props"><svg width="17" height="17"><use href="#cw"/></svg><div class="combo flex-grow-1"><span class="bg-black" style="width:16px;height:16px;margin-left:2px"></span><select aria-label="对象颜色"><option>ByLayer</option></select><span class="tri"></span></div></div>
        <div class="d-flex align-items-center props"><svg width="17" height="17"><use href="#lw"/></svg><div class="combo flex-grow-1"><span class="ln ms-1"></span><select aria-label="线宽"><option>ByLayer</option></select><span class="tri"></span></div></div>
        <div class="d-flex align-items-center props"><svg width="17" height="17"><use href="#lt"/></svg><div class="combo flex-grow-1"><span class="ln ms-1"></span><select aria-label="线型"><option>BYLAYER</option></select><span class="tri"></span></div></div>
      </div>
    </div>
    <div class="ptitle">特性<span class="tri"></span><svg class="position-absolute end-0 me-1" width="7" height="7"><path fill="none" stroke="#333" d="M1 1l4 4M6 2v4H2"/></svg></div>
  </section>
  <section class="panel" style="flex:65 1 0">
    <div class="pbody">
      <button class="big"><span class="pic"><svg width="34" height="34"><use href="#grp"/></svg></span>组</button>
      <div class="grid3"><button class="box" aria-label="解除编组"><svg width="18" height="18"><use href="#g1"/></svg></button><button class="box" aria-label="组编辑"><svg width="18" height="18"><use href="#g2"/></svg></button><button class="box" aria-label="组选择"><svg width="18" height="18"><use href="#g3"/></svg></button></div>
    </div>
    <div class="ptitle">组<span class="tri"></span></div>
  </section>
  <section class="panel" style="flex:75 1 0">
    <div class="pbody">
      <button class="big" style="width:50px"><span class="pic"><svg width="32" height="32"><use href="#meas"/></svg></span>测量<span class="tri sm"></span></button>
      <div class="grid3"><button class="box" aria-label="快速选择"><svg width="18" height="18"><use href="#u1"/></svg></button><button class="box" aria-label="全部选择"><svg width="18" height="18"><use href="#u2"/></svg></button><button class="box" aria-label="计算器"><svg width="18" height="18"><use href="#calc"/></svg></button></div>
    </div>
    <div class="ptitle">实用工具<span class="tri"></span></div>
  </section>
  <section class="panel border-0 me-0" style="flex:75 1 0">
    <div class="pbody">
      <button class="big" style="width:48px"><span class="pic"><svg width="32" height="34"><use href="#paste"/></svg></span>粘贴<span class="tri sm"></span></button>
      <div class="grid3"><button class="box" aria-label="剪切"><svg width="18" height="18"><use href="#cut"/></svg></button><button class="box" aria-label="复制"><svg width="18" height="18"><use href="#cp"/></svg></button><button class="box" aria-label="特性匹配"><svg width="18" height="18"><use href="#mp"/></svg></button></div>
    </div>
    <div class="ptitle">剪贴板</div>
  </section>
</div>
<div class="strip" style="height:5px"></div>

<main class="work flex-grow-1 d-flex">
  <div class="position-relative flex-grow-1 overflow-hidden">
    <svg class="drawing" id="drawing" shape-rendering="crispEdges" fill="none"></svg>
    <div class="vname position-absolute">[−] [俯视] [二维线框]</div>
    <div class="mdi position-absolute d-flex gap-2">
      <svg width="13" height="12"><path fill="#fff" stroke="#555" d="M.5 6.500h12v4H.5z"/></svg>
      <svg width="12" height="12"><path fill="#fff" stroke="#444" d="M3.500.5h8v8h-8zM.5 3.500h8v8h-8zM3.500 6.500h2v2h-2z"/></svg>
      <svg width="12" height="12"><path fill="#fff" stroke="#444" stroke-width="1.500" d="M1 1h3l2 2.500L8 1h3L8 6l3 5H8L6 8.500 4 11H1l3-5z"/></svg>
    </div>
    <div class="cube position-absolute">
      <svg class="position-absolute" style="left:2px;top:2px" width="82" height="82"><circle cx="41" cy="41" r="34" fill="none" stroke="#fafafa" stroke-width="7"/><path fill="#ededed" stroke="#999" d="M25.500 25.500h32v33h-32z"/><path fill="#dcdce4" d="M32 32h20v20H32z"/><path stroke="#999" fill="none" d="M41 35v12M32 47.500h20M46 40h3"/></svg>
      <span class="position-absolute" style="left:37px;top:1px">北</span><span class="position-absolute" style="left:1px;top:37px">西</span><span class="position-absolute" style="left:72px;top:37px">东</span><span class="position-absolute" style="left:37px;top:73px">南</span>
    </div>
    <button class="wcs position-absolute">WCS <svg class="d-inline" width="11" height="7"><path fill="none" stroke="#aab" d="M1 1h8L5 5z"/></svg></button>
    <div class="navbox position-absolute"><svg width="32" height="211" viewBox="0 0 32 211" fill="none" stroke="#d6d9d9" stroke-width="1.300"><circle cx="25.500" cy="5.500" r="3.500" fill="#e3e3e3"/><path d="M26 20H15a11 11 0 1 0 11 11z"/><circle cx="15" cy="30" r="6"/><path fill="#ccc" stroke="none" d="M13 50h5l-2.500 3zM13 120h5l-2.500 3zM13 158h5l-2.500 3z"/><path stroke="#ccc" d="M3 56h26M3 164h26"/><path d="M12 84c-2-4-5-6-8-10 2-2 4 0 6 2L7 65c2-2 3 0 5 7l0-10c2-2 3 0 4 9l3-9c2-1 3 0 1 10l4-6c2-1 2 1 0 5-2 4-2 9-5 13zM4 90l14 14M4 90v5M4 90h5M18 90L4 104M18 90h-5M18 90v5M4 104v-5M4 104h5M22 107l6 5"/><circle cx="19" cy="104" r="5"/><path d="M15 127l4 4h-2v17h-4v-17h-2zM4 140c4-4 22-4 23 0s-14 6-21 2M4 140l6 4M3 170h6v6H3zM12 170h6v6h-6zM21 170h6v6h-6zM3 180h16v13H3zM8 183l6 4-6 4z"/><circle cx="25.500" cy="206" r="3.500" fill="#e3e3e3"/></svg></div>
  </div>
  <div class="vs d-flex flex-column align-items-center justify-content-between py-2">
    <svg width="7" height="4"><path d="M0 4l3.500-4L7 4z" fill="#333"/></svg>
    <span class="thumb" style="width:15px;height:15px;margin-bottom:182px"></span>
    <svg width="7" height="4"><path d="M0 0l3.500 4L7 0z" fill="#333"/></svg>
  </div>
</main>

<div class="lay d-flex">
  <div class="d-flex" style="padding-left:2px">
    <button class="nv" aria-label="第一个"><svg width="8" height="8"><path fill="#666" d="M0 0h1v8H0zM7 0v8L2 4z"/></svg></button>
    <button class="nv" aria-label="上一个"><svg width="6" height="8"><path fill="#666" d="M5 0v8L0 4z"/></svg></button>
    <button class="nv" aria-label="下一个"><svg width="6" height="8"><path fill="#666" d="M0 0v8l5-4z"/></svg></button>
    <button class="nv" aria-label="最后一个"><svg width="8" height="8"><path fill="#666" d="M7 0h1v8H7zM0 0v8l5-4z"/></svg></button>
  </div>
  <svg width="7" height="16"><path fill="none" stroke="#555" d="M1 0l5 14"/></svg>
  <button class="ltab bg-white px-1">模型</button>
  <svg width="10" height="16"><path fill="none" stroke="#555" d="M9 0L3 14"/></svg>
  <button class="ltab">布局1</button>
  <svg width="14" height="16"><path fill="none" stroke="#555" d="M11 0L5 14"/></svg>
  <div class="d-flex align-items-center hs ms-auto justify-content-between">
    <span class="d-flex align-items-center gap-2"><span style="width:5px;height:13px;border:1px solid #999;border-right:0"></span><svg width="4" height="7"><path fill="#222" d="M4 0v7L0 3.500z"/></svg></span>
    <span class="thumb" style="width:15px;height:13px;margin-right:44px"></span>
    <svg width="4" height="7"><path fill="#222" d="M0 0v7l4-3.500z"/></svg>
  </div>
</div>
<div class="strip" style="height:4px"></div>

<div class="d-flex">
  <div class="cmdgrip pt-1 px-1"><svg width="12" height="6"><path stroke="#333" stroke-dasharray="1 1" d="M0 .5h12M0 2.500h12M0 4.500h12"/></svg></div>
  <div class="flex-grow-1">
    <div class="cmd cj"><div><span>Autodesk DWG</span>。 <span></span>此文件上次由<span> Autodesk </span>应用程序或<span> Autodesk </span>许可的应用程序保存，是可靠的<span> DWG</span>。</div><div>命令<span>:</span></div></div>
    <div class="cin"><label for="ci">命令<span style="font-size:12px">:</span></label><input id="ci" class="flex-grow-1 ms-1" type="text"></div>
  </div>
</div>

<footer class="status d-flex">
  <div class="coord">17853.5331, 39383.4410, 0.0000</div>
  <div class="d-flex" id="toggles"></div>
  <div class="sgroup ms-auto"><button class="st text-black" style="width:31px">模型</button><button class="st" aria-label="布局"><svg width="17" height="17"><use href="#s-lay1"/></svg></button><button class="st" aria-label="快速查看"><svg width="17" height="17"><use href="#s-lay2"/></svg></button></div>
  <div class="sgroup" style="margin-left:17px"><button class="st text-black" style="width:54px;font-family:'Liberation Mono'"><svg width="16" height="16"><use href="#s-ann"/></svg><span class="ms-1">1:1</span><span class="tri ms-1" style="border-top-color:#000"></span></button><button class="st" aria-label="注释可见性"><svg width="17" height="17"><use href="#s-ann"/><circle cx="13" cy="10" r="3" fill="#ffd35c" stroke="#e06a00"/></svg></button><button class="st" aria-label="自动缩放"><svg width="17" height="17" opacity=".45"><use href="#s-ann"/></svg></button></div>
  <div class="sgroup" style="margin-left:5px"><button class="st" aria-label="工作空间"><svg width="18" height="18"><use href="#gear"/></svg></button><button class="st" aria-label="锁定"><svg width="17" height="17"><use href="#lock2"/></svg></button><button class="st" aria-label="硬件加速"><svg width="17" height="17" viewBox="0 0 18 18"><path fill="#8893a5" stroke="#345" d="M2 4h13v6H2zM4 2v10M7 2v10M10 2v10"/><circle cx="14" cy="10" r="3" fill="#bfe0f5" stroke="#2a7ab5"/></svg></button></div>
  <div class="tray d-flex align-items-center justify-content-center"><svg width="17" height="15" viewBox="0 0 18 16"><path fill="#8fb8de" stroke="#225" d="M1 1h8l4 4v5H1z"/><path fill="#f7c52f" stroke="#a70" d="M2 9h11v5H2z"/><path stroke="#1c9a1c" stroke-width="2.500" fill="none" d="M7 10l4 4 6-7"/></svg><svg width="15" height="15"><use href="#bulb"/></svg></div>
  <button class="border-end border-secondary" style="width:17px" aria-label="状态栏菜单"><span class="tri d-block ms-2" style="border-top-color:#000"></span></button>
  <button class="st" aria-label="全屏显示"><svg width="14" height="14"><path fill="#fff" stroke="#333" d="M.5.5h13v13H.5zM0 2.500h14"/></svg></button>
  <svg width="16" height="21"><path stroke="#aaa" stroke-width="2" stroke-dasharray="2 2" d="M4 18h12M8 14h8M12 10h4"/></svg>
</footer>
</div>

<script>
document.getElementById('toggles').innerHTML =
  [['snap',0,'推断约束'],['dots',0,'捕捉'],['grid',0,'栅格'],['orth',0,'正交'],['pol',0,'极轴'],['os',1,'对象捕捉'],['3d',0,'三维捕捉'],['ang',1,'对象追踪'],['ucs',0,'动态UCS'],['dyn',0,'动态输入'],['lwt',0,'线宽'],['tpy',1,'透明度'],['cal',0,'快捷特性'],['sel',1,'选择循环']]
  .map(([n,on,t]) => `<button class="st${on?' on':''}" aria-label="${t}"><svg width="17" height="17"><use href="#${n==='cal'?'calc':'s-'+n}"/></svg></button>`).join('');

/* Sheets are drawn in thirds of a pixel: one hairline is 3 units wide. */
let seed = 7, out = '';
const rnd = () => (seed = (seed * 16807) % 2147483647) / 2147483647;
const K='#000', R='#f00', G='#0f0', B='#00f', Y='#ff0';
const p = (c, d, w=3, x='') => out += `<path stroke="${c}" stroke-width="${w}" d="${d}" ${x}/>`;
const f = (c, x, y, w, h) => out += `<path fill="${c}" d="M${x} ${y}h${w}v${h}h${-w}z"/>`;
const r = (c, x, y, X, Y2, w=3) => p(c, `M${x} ${y}H${X}V${Y2}H${x}z`, w);
const c = (col, x, y, rad, w=3, e='') => out += `<circle cx="${x}" cy="${y}" r="${rad}" stroke="${col}" stroke-width="${w}" ${e}/>`;
const open = (x, y) => out += `<g transform="translate(${x-9},${y-158}) scale(.33333)">`;
const close = () => out += '</g>';
function specks(col, x, y, w, h, prob){ let d='';
  x=Math.round(x/3)*3; y=Math.round(y/3)*3;
  for(let j=y; j<y+h; j+=3) for(let i=x; i<x+w; i+=3) if(rnd()<prob) d+=`M${i} ${j}h3v3h-3z`;
  out += `<path fill="${col}" d="${d}"/>`; }
function parts(x, y, X, Y2, red=true){           /* parts list */
  f(K,x,y,X-x,Y2-y); const x0=Math.ceil(x/3)*3; y=Math.round(y/3)*3;
  const cols=[]; for(let i=x0+9;i<X-6;i+=9+3*Math.floor(rnd()*5)) cols.push([i,.05+rnd()*.6]);
  let d=''; const dens=i=>{let q=.5; for(const [a,b] of cols) if(i>a) q=b; return q;};
  for(let j=y+3;j<Y2-3;j+=9) for(let i=x0+3;i<X-3;i+=3) if(!cols.some(q=>q[0]===i)&&rnd()<dens(i)) d+=`M${i} ${j}h3v3h-3z`;
  for(let j=y+6;j<Y2-3;j+=9) for(let i=x0+3;i<X-3;i+=3) if(!cols.some(q=>q[0]===i)&&rnd()<dens(i)*.3) d+=`M${i} ${j}h3v3h-3z`;
  out += `<path fill="#fff" d="${d}"/>`; if(red) p(R,`M${x+1.5} ${y}V${Y2}`,2); }
function stamp(x, y, X, Y2){                     /* title block */
  const a=x+(X-x)*.33, b=x+(X-x)*.69, m=y+13;
  r(R,x,y,X,Y2); p(R,`M${x} ${m}H${X}M${a} ${m}V${Y2}M${b} ${y}V${Y2}`);
  p(K,`M${x+3} ${m+5}H${a}M${x+3} ${m+14}H${a}M${x+3} ${m+23}H${a}M${x+14} ${m}V${Y2}M${x+30} ${m}V${Y2}`);
  f(K,a+2,m+1,b-a-4,4); f(K,b+3,m+10,X-b-5,11); specks('#fff',b+3,m+10,X-b-5,11,.15);
  const mid=(a+b)/2; f(R,mid-14,m+10,10,14); f(R,mid+2,m+10,12,14); specks('#fff',mid-12,m+12,24,10,.2); }
const dimv=(x,y,Y2)=>p(K,`M${x} ${y}V${Y2}M${x-5} ${y}H${x+5}M${x-5} ${Y2}H${x+5}M${x-4} ${y+(Y2-y)/2}v8`);
const dimh=(y,x,X)=>p(K,`M${x} ${y}H${X}M${x} ${y-5}V${y+5}M${X} ${y-5}V${y+5}M${(x+X)/2-6} ${y-3}h12`);
const tag=(x,y,X,Y2)=>{p(K,`M${x} ${y}L${X} ${Y2}`);f(K,x-4,y-4,6,6);f(R,x+2,y-3,4,4)};
function wheel(x,y,rad,q){
  c(R,x,y,rad); c(K,x,y,rad,3,'stroke-dasharray="9 12"'); c(G,x,y,rad,3,'stroke-dasharray="6 30"');
  for(let i=0;i<8;i++){const a=(22.5+45*i)*Math.PI/180,u=Math.cos(a),v=Math.sin(a);
    const d=`M${x+u*q} ${y+v*q}L${x+u*rad} ${y+v*rad}`; p(K,d,6); p(R,d,3,'stroke-dasharray="6 12"');}
  c(R,x,y,q,5); p(G,`M${x-rad-8} ${y}H${x+rad+8}M${x} ${y-rad-8}V${y+rad+8}`); }

/* tower, section */
open(280,230);
r(K,40.5,40.5,706.5,511.5);r(R,61.5,49.5,700.5,502.5);
f(B,120,190,162,24);specks('#fff',120,192,162,15,.1);p(B,'M120 213l20 6 20-6 20 6 20-6 20 6 20-6 20 6 20-6',6);
f(Y,120,225,162,32);specks(B,120,237,162,18,.17);specks('#fff',120,225,162,6,.25);f(B,120,258,162,12);p(B,'M120 269l20 7 20-7 20 7 20-7 20 7 20-7 20 7 20-7',6);
f(Y,120,288,162,20);specks('#fff',120,303,162,6,.3);p(Y,'M118 310h10M118 403h166',5);
p(R,'M118 455V148Q124 124 150 116Q176 110 176 102H228V108Q258 114 272 126L285 142V455M118 152H285M118 158H285M118 222H285M118 232H285M118 280H320M118 290H285M228 102V110M300 222V280M306 222V280M285 222H316',4);
p(K,'M118 317H285');p(G,'M118 320H285M118 404H285M202 98V460M244 380V440M276 384h20');
f(K,110,448,186,12);specks('#fff',110,447,186,3,.3);p(G,'M202 98V460',3);p(R,'M128 446H160M195 431a7 7 0 1 0 14 0a7 7 0 1 0-14 0');p(R,'M170 237h8M226 237h8M170 293h8M220 298l12-8',8);
dimh(94,176,228);f(K,232,90,20,12);dimv(341,103,455);dimv(335,103,157);dimv(92,185,262);dimv(100,262,455);p(K,'M232 385V440M100 455H345M285 104H345M285 157H335M92 185H118M100 262H118');
p(K,'M108 108L150 170M285 212L320 196M285 205L300 190M285 290L320 315M250 290L320 315M280 325L320 337');f(R,103,104,8,5);f(K,316,194,8,6);f(K,316,312,8,6);f(K,316,334,8,6);
dimv(322,224,280);f(K,316,236,18,25);f(K,130,330,56,9);p(B,'M116 330q-10 8-10 22t10 22h-6V330',4);f(K,108,348,10,6);
for(const [x,y]of[[112,186],[112,262],[286,188],[288,378],[112,390],[112,435],[278,442]]){c(R,x+4,y,7);specks(K,x-4,y-8,16,16,.45)}
wheel(486,217,83,26);p(R,'M374 212H400V222H374zM460 212H512V220H460zM484 192V242M492 192V242',5);p(G,'M410 172L486 217L565 262');p(B,'M460 297h51v7h-51z');f(R,478,126,18,9);f(K,480,104,18,8);
p(K,'M374 222V322M382 222V315M374 318H486M382 315H486M486 300V322M365 180L398 210M387 180L402 210M352 264L384 225M585 188L570 216M608 188L574 216M434 192q-12 24 0 48M548 236q-6-14-2-22');f(K,360,172,8,14);f(K,382,172,8,14);f(K,604,184,8,7);f(K,581,184,8,7);f(K,426,312,14,7);specks(R,350,260,9,6,.6);
p(B,'M396 395h62v12h-62zM411 396a17 17 0 0 1 34 0z');p(R,'M411 400V444M445 400V444M400 440V472M400 472H472M411 420H445',4);p(K,'M400 440H473V471H400zM460 400H473V440M411 440V415M445 440V415M445 430L490 418');p(G,'M392 400H462M428 378V470M392 457H476');c(R,428,400,18);f(K,418,364,18,6);f(K,484,414,9,8);
parts(546,87,684,135,false);specks(K,585,76,80,12,.35);parts(591,222,690,270,false);specks(K,625,212,40,9,.4);f(K,586,287,14,8);p(K,'M592 297H692M594 302H672M596 307H652M594 312H670M598 319H668',5);
parts(556,339,700,462);stamp(556,463,700,502);close();

/* tower, elevation */
open(280,405);
r(K,34.5,37.5,700.5,508.5);r(R,55.5,43.5,691.5,499.5);
p(Y,'M130 208H300M130 307H300M130 391H300',8);p(G,'M120 208H312M120 217H312M120 273H312M120 307H312M120 391H312M214 90V460M184 200V290M242 200V290M120 178h18M120 256h18');
p(R,'M130 445V135Q140 118 160 116L186 104V96H240V104L280 118Q296 124 298 138V445M130 136H298M186 96V106M240 96V106',4);p(R,'M296 150V445',6);
p(K,'M132 125Q140 114 160 112L186 98M240 98L285 112Q298 118 300 135M186 82V104M178 110V135M150 115H185M240 105H290M240 97H338M100 178V448M112 256V448M338 97V448M331 97V448M300 136H335M316 217V448M282 208V448M130 382H316M184 248H242M95 448H340M100 178H130M112 256H130M306 150L300 130M104 102L134 118M92 145L130 150M118 462L132 448M292 290V430');
f(K,112,443,198,11);specks(R,132,441,160,4,.5);specks(B,140,451,160,4,.2);
for(const[x,y]of[[186,222],[214,218],[242,222],[186,276],[214,272],[242,276]]){specks(K,x-9,y-9,20,18,.5);specks(B,x-3,y-3,8,8,.5)}
for(const[x,y]of[[128,208],[128,256],[128,278],[128,307],[128,390],[300,212],[300,270],[126,440],[300,435],[102,170],[120,150]]){specks(K,x-6,y-7,16,16,.5);p(R,`M${x-3} ${y-8}v10`)}
r(B,124,322,145,374);dimv(146,322,374);c(R,213,426,7,4);p(K,'M222 422l14 8v14M160 78v22M220 82H228');f(K,248,84,16,12);f(K,98,98,10,8);f(K,126,114,12,12);f(K,158,76,8,16);
wheel(482,175,85,26);p(G,'M482 175L415 242M482 175L548 242');p(B,'M393 148h8v52h-8z');p(K,'M373 88H482M373 88V175H395M540 105L558 98M465 125q18-14 36 0M525 200l12-14M573 172h8M410 235l8 10M550 235l8 10');f(K,474,64,16,10);f(K,545,96,16,12);f(K,474,266,14,8);
p(K,'M642 118V230M622 150H642V196H622zM636 118H678M636 230H650');specks(K,640,120,9,108,.7);p(B,'M646 128h18v92h-18');f(K,640,94,8,14);f(R,636,170,8,6);tag(594,188,635,182);
r(B,384,310,422,373);p(K,'M384 304V370M376 345H385V368H376M386 304H424M410 370L440 368M394 320q16-5 20 12M385 366L415 340L442 314');p(Y,'M388 337h24',5);p(R,'M404 350l8-8v-14M430 340h12');f(K,398,280,7,12);f(K,438,366,9,6);f(K,440,310,8,7);
r(B,460,317,508,373);p(R,'M470 326h24v12l-6 4v26h-12v-26l-6-4z',5);p(K,'M468 372H498M472 364H495M514 317V373M495 345L532 360M510 317H524V373H510');specks(K,472,322,20,48,.5);p(G,'M484 310V380');f(K,477,287,14,12);f(K,496,294,26,4);f(K,528,356,8,6);
p(B,'M373 421h22v57h-22z');p(K,'M382 428h14v44h-14zM396 410V488M404 410V488M410 420V480M368 405H416V420M386 488H412M350 432L382 445M415 440L440 422M415 448L440 438M428 425V475M418 462L442 472M418 474L438 482');specks(K,396,415,14,68,.8);specks(R,410,425,12,30,.4);specks(G,412,430,10,25,.3);f(K,390,388,8,12);f(K,346,430,8,6);f(K,432,464,10,9);
r(B,463,451,523,466);p(K,'M463 450H530M470 456H516V462H470zM490 415V450M498 410V450M467 420L482 440M525 415L508 440M465 480L488 465M531 440V460');specks(K,482,418,26,38,.7);f(R,460,416,8,5);f(R,520,416,6,5);specks(K,482,400,18,9,.6);
parts(550,297,691,461);stamp(550,461,691,499);close();

/* support grids */
open(530,230);
r(K,22.5,28.5,493.5,361.5);r(R,43.5,34.5,484.5,352.5);
c(R,175,165,83,5);c(K,175,165,83,3,'stroke-dasharray="4 18"');c(G,175,165,83,3,'stroke-dasharray="4 24"');p(R,'M131 97V237M150 87V245M189 87V245M205 87V245M220 95V237M94 138H256M94 190H256M86 163H262',5);p(G,'M175 72V255M70 166H262');p(G,'M162 82V248M192 82V248',3,'stroke-dasharray="24 6"');
p(K,'M66 160V66H175M72 160V72H170M66 66V72M175 62V75M92 190L258 141M100 190V258H248V190M130 237V258M160 245V258M220 237V258M190 248V258M114 68h12');f(R,62,160,14,9);f(R,82,158,8,13);f(K,167,50,16,8);f(K,195,153,12,7);f(K,110,254,14,6);f(K,167,254,20,6);
c(R,371,151,83,4);c(K,371,151,83,3,'stroke-dasharray="3 18"');p(R,'M343 75V230M399 75V230M290 126H456M290 177H456',5);p(G,'M371 65V238M288 151H456M343 80V225');
p(K,'M288 164L456 139M290 124H277V180H290M343 232V242H400V232M449 124L467 110M343 230L325 242');f(K,362,50,16,7);f(K,443,122,12,10);f(R,444,126,8,4);f(K,337,225,13,11);f(R,340,228,7,5);f(K,410,138,12,8);f(R,462,108,8,4);f(R,322,240,8,4);f(K,362,240,14,6);
p(K,'M270 268A32 32 0 1 0 312 325M275 275H320V325H278M254 290H246V305H254M290 280L325 262',3);p(K,'M264 265L308 328',6);p(R,'M254 290H298L308 305H254');p(G,'M250 298H312');p(Y,'M288 290l8 14');f(K,272,240,5,12);f(R,320,260,8,4);
p(K,'M473 238H405V290Q412 300 435 298L440 240M410 257H398V272H410M473 238V289M440 290H473M450 250L475 225',3);p(K,'M418 232L448 290M418 262H435',6);p(R,'M405 257H452V272H420');specks(K,425,240,34,50,.35);p(G,'M400 264H440');specks(Y,430,250,14,20,.2);f(K,438,218,7,13);f(R,470,228,9,4);
stamp(343,313,484,352);close();

/* plates and pipes */
open(700,230);
r(K,22.5,34.5,688.5,505.5);r(R,43.5,43.5,679.5,496.5);
c(B,209,186,116,3);c(K,209,186,116,3,'stroke-dasharray="3 9"');p(R,'M105 140V232M145 92V282M186 72V300M228 72V300M269 92V282M310 140V232',6);p(G,'M209 64V308M145 92V282M98 130h12M98 240h12M170 130h112M180 245h96',3);p(R,'M85 181H323V193H85z');p(G,'M76 187H330');p(G,'M186 80V100M228 110V130M310 150V230',4);
p(K,'M98 218L318 158M228 76H347V298H232M269 94H340V280H272M310 142H334V232H310M80 190V253H323V190M103 230V316H310V232M145 282V316M186 300V316M228 300V316M269 282V316M118 170V206M132 130V245M138 130V245M172 92V282M180 92V282M228 73L285 56M325 185L368 168M310 235L368 210M228 230L250 213M269 230L292 213M75 160L92 178M75 187H80');
c(R,85,187,11,4);c(K,85,187,13,3,'stroke-dasharray="5 7"');f(K,330,181,15,10);for(const[x,y]of[[282,52],[364,165],[364,207],[72,160],[248,212],[288,212],[240,174],[120,311],[160,311],[204,311],[245,311],[285,311],[200,247],[128,186],[168,186],[215,125],[238,125],[258,125],[280,125]])f(K,x-4,y-2,8,6);
specks(K,436,120,50,56,.18);p(K,'M440 122H478M446 132H474V182H446zM430 152H502M440 172H512M460 104V118M415 126L440 138M415 138L432 150M414 172L432 162M488 122V180M492 130H500');p(R,'M448 133h28M430 160v14M478 160v14',4);p(G,'M460 110V190M430 168h60');f(K,455,102,10,8);f(R,410,124,8,4);f(R,410,140,8,4);f(K,496,162,12,9);f(K,448,175,20,12);
for(const x of[195,360]){p(K,`M${x-9} 358V470M${x+9} 358V470M${x-4} 350h14M${x+16} 378V475M${x+22} 404V440M${x+10} 404h16M${x+10} 440h16M${x-30} 382l18 18M${x-30} 402l18 16M${x-32} 454l22 10M${x-32} 468l22-8M${x-32} 480l22-12M${x-16} 372l10 5`);specks(K,x-10,358,18,114,.6);p(R,`M${x-4} 365V480M${x+4} 365V480`);p(G,`M${x} 362V395M${x-14} 423h26M${x} 445V480`);f(K,x-7,335,14,9);f(R,x-7,344,14,3);specks(K,x+6,380,9,90,.4);for(const y of[380,401,452,466,478])f(K,x-36,y-2,7,5)}
p(K,'M538 320H600M542 327H612',6);parts(538,333,679,457);stamp(538,457,679,496);
r(K,706.5,37.5,1177.5,370.5);r(R,727.5,46.5,1168.5,364.5);
p(R,'M796 100h20v8h-20zM800 108V136h12V108M800 120h12',4);p(G,'M808 95V160');p(K,'M818 100H838M836 100V138M812 138H840M829 118v10M798 140h18v16h-18z');f(K,778,146,18,8);specks(K,795,135,24,22,.6);
p(R,'M802 222q5-6 12 0V262l5 8v20l-5 8V325q-6 5-12 0V298l-5-8V270l5-8zM796 270h24v22h-24z',4);p(K,'M812 226H845M840 226V325M812 325H845M834 226V325M828 276h10');p(G,'M808 212V334M790 283h30');
p(R,'M904 170V145Q906 136 918 136H945V128H990V136H1000Q1014 138 1014 150V172M918 170V152H1000V172M952 128V160M985 128V160',4);p(K,'M906 108H1006M906 108V130M1006 108V138M888 127H950M888 127V165M882 165H905M942 157H992M908 90L918 135M945 102L950 130M995 90L985 130M978 90H1000M968 118H985');p(G,'M967 120V162M905 143H1010M911 145V175');specks(K,945,128,42,10,.35);for(const[x,y]of[[908,88],[945,100],[996,88]])specks(K,x-3,y-5,9,9,.7);for(const x of[878,972,906,1000])f(K,x,166,16,8);
p(K,'M917 275V295Q920 305 948 304M917 275H970M950 275V305M960 270V305M898 264L925 272M962 254L945 272M940 240V248M964 270H975');p(R,'M925 278h20M918 290q0 12 12 12');p(G,'M940 262v20');specks(K,918,265,50,12,.45);f(K,936,238,6,10);f(K,895,261,7,6);f(R,960,250,7,4);f(K,966,263,10,8);
parts(1027,288,1168,322);stamp(1027,323,1168,364);close();

/* nozzle detail and base plate */
open(530,400);
r(K,34.5,37.5,367.5,271.5,4);r(K,55.5,40.5,364.5,267.5,5);
f(K,183,48,162,72);p('#fff','M192 55H340M190 62H338M189 112H342',3,'stroke-dasharray="6 6 3 3"');p('#fff','M192 70V108M252 70V108M300 70V108M318 70V108M330 70V108',3,'stroke-dasharray="3 3"');
p(K,'M108 60H148M112 55V95M90 98H120M140 80H172V104H140M136 110H152V122H136zM104 72V90M128 52V60');p(R,'M108 75h12v18h-12zM120 78h25M115 72h30',4);p(G,'M128 70V115');specks(K,96,60,60,46,.22);f(K,118,54,12,8);f(K,140,82,16,10);
p(B,'M125 151H187V240H88');specks(K,90,170,96,36,.42);specks(K,90,206,104,12,.85);specks(K,90,220,96,20,.5);f(K,97,195,30,22);p(K,'M119 138V180M119 142H170M125 157H166V200M60 190L95 205M62 205L90 215M84 163L110 180M84 178L108 190M187 180L218 156M180 190L218 172M165 205L218 187M190 218L208 232M190 228L208 246M97 220V262H165M97 240H88V180M103 222V250H160M106 254H160M88 180H95M196 208V230M190 238H200M157 124V136');p(R,'M128 179H180',4);
for(const[x,y]of[[84,162],[84,177],[62,189],[62,204],[218,154],[218,171],[218,187],[208,232],[208,246]]){f(K,x-4,y-4,8,5);f(R,x-4,y+1,8,3)}f(K,153,124,9,8);
stamp(220,226,361,267);
r(K,577.5,112.5,1045.5,445.5);r(R,595.5,121.5,1039.5,436.5);
p(R,'M645 167.500H820',6);p(K,'M814 163H824V171M820 168L832 178');p(G,'M733 160V173M640 298H828M733 205V392');c(R,734,299,86,4);p(R,'M703 218V380M764 218V380');p(K,'M648 320L820 280M685 196L718 216M638 230L674 250M703 380V398H764V380');f(R,682,198,6,4);f(R,828,174,5,6);f(K,765,285,12,8);f(K,728,393,10,5);f(K,684,193,5,5);f(K,636,226,5,6);for(const x of[694,710,754,770])f(K,x,333,4,8);
p(K,'M915 205H922V222H915zM926 192H955M922 218H952V196M950 186V218M952 194H960M928 186h10M937 158v8');p(R,'M928 200h16v6');f(R,934,168,6,3);
p(B,'M890 295V283H980V295');p(K,'M904 290V273H968V290M888 293H995V303H888M940 296L990 260M935 262V276M990 285V300M968 285V295');p(R,'M900 292H975M905 304H962');f(K,905,293,60,9);p(G,'M935 275V312');f(K,928,250,13,5);f(R,930,257,10,4);f(K,987,257,7,6);f(K,972,282,12,10);
parts(895,366,1039,398);stamp(895,398,1039,436);close();

/* channel bars */
open(910,380);
const bar=(y,n)=>{r(K,43.5,y,376.5,y+235);r(R,61.5,y+4,370.5,n?y+231:y+240)};
bar(166.5,1);r(R,97,202,346,217);p(G,'M92 210H355');p(K,'M230 202V219M346 204H358M346 217H358M354 202V219');f(K,348,204,8,12);f(R,258,190,6,10);f(K,103,204,7,7);f(R,82,206,6,6);f(K,255,223,8,8);
r(K,100,236,344,262);r(R,100,241,346,253);p(G,'M96 246H352');p(K,'M230 236V256M97 236V256M346 236V250M350 241H358M350 253H358M354 240V254M218 232h10M218 258h10');
r(R,83,317,112,361,5);p(G,'M97 310V378M145 337H205');p(K,'M84 363V378H112V363M112 317H130M112 361H130M122 317V361M84 372H112M66 310L90 322M66 328L84 333');f(K,88,296,16,8);f(K,117,318,8,42);specks('#fff',117,320,8,40,.3);f(K,66,310,9,6);f(K,66,326,9,6);
r(R,155,315,188,360,7);f('#fff',152,328,5,28);p(K,'M140 308H158M155 330V360M200 310V360M206 310V360M190 310H206M136 358H156M144 350V366M188 300L205 298M180 362V370H196');f(K,163,292,12,9);f(K,202,296,8,7);f(K,183,360,11,10);
f(K,232,296,10,5);f(K,238,303,65,8);f(K,238,309,95,6);f(K,236,315,40,6);parts(228,327,371,359);stamp(228,358,371,397);
bar(466.5,0);r(R,91,511,346,529);p(G,'M84 520H352');p(K,'M243 511V529M346 512H357V529H346M352 511V530');f(K,346,514,8,14);f(R,256,498,5,9);f(R,256,532,5,9);f(K,76,518,7,9);f(R,96,524,8,4);
p(K,'M91 546H346V560M91 555V577H346V568M214 543h10M214 575h10M243 556V570M348 556H358M348 570H358M353 556V571');r(R,91,556,346,571);p(G,'M75 565H346');
r(K,93,620,116,658,4);p(K,'M90 600H116V620M90 610H116M120 620H134M120 658H134M124 620V658M131 620V658M116 620L145 606M116 630L145 618M134 632L145 628M134 642L150 648M108 600V615');p(G,'M103 600V665');f(K,97,582,14,5);f(R,97,590,16,3);for(const y of[603,617,630,644])f(R,140,y,8,3);
r(K,172,622,202,656,4);p(K,'M150 634L168 638M150 648L168 650M190 622V656M198 622V656M172 618H206M172 656H206M165 642H172');p(G,'M160 640H188');f(K,175,596,14,6);f(R,172,604,16,3);f(K,232,588,8,8);f(K,238,601,95,7);f(K,238,607,38,7);parts(228,621,371,658);stamp(228,658,371,700);
/* cursor */
p(K,'M328.500 27V230M225 127.500H429');r('#333',319.5,118.5,337.5,136.5);close();

/* UCS mark */
open(0,520);p(K,'M70.500 81V228M86 229.500H219');r(K,58.5,214.5,85.5,241.5);p(K,'M77 27L95 45L113 27M95 45V66M234 186L272 225M272 186L234 225');close();
document.getElementById('drawing').innerHTML = out;
</script>
<script src="https://cdn.jsdelivr.net/npm/bootstrap@5.3.0/dist/js/bootstrap.bundle.min.js"></script>
</body>
</html>
